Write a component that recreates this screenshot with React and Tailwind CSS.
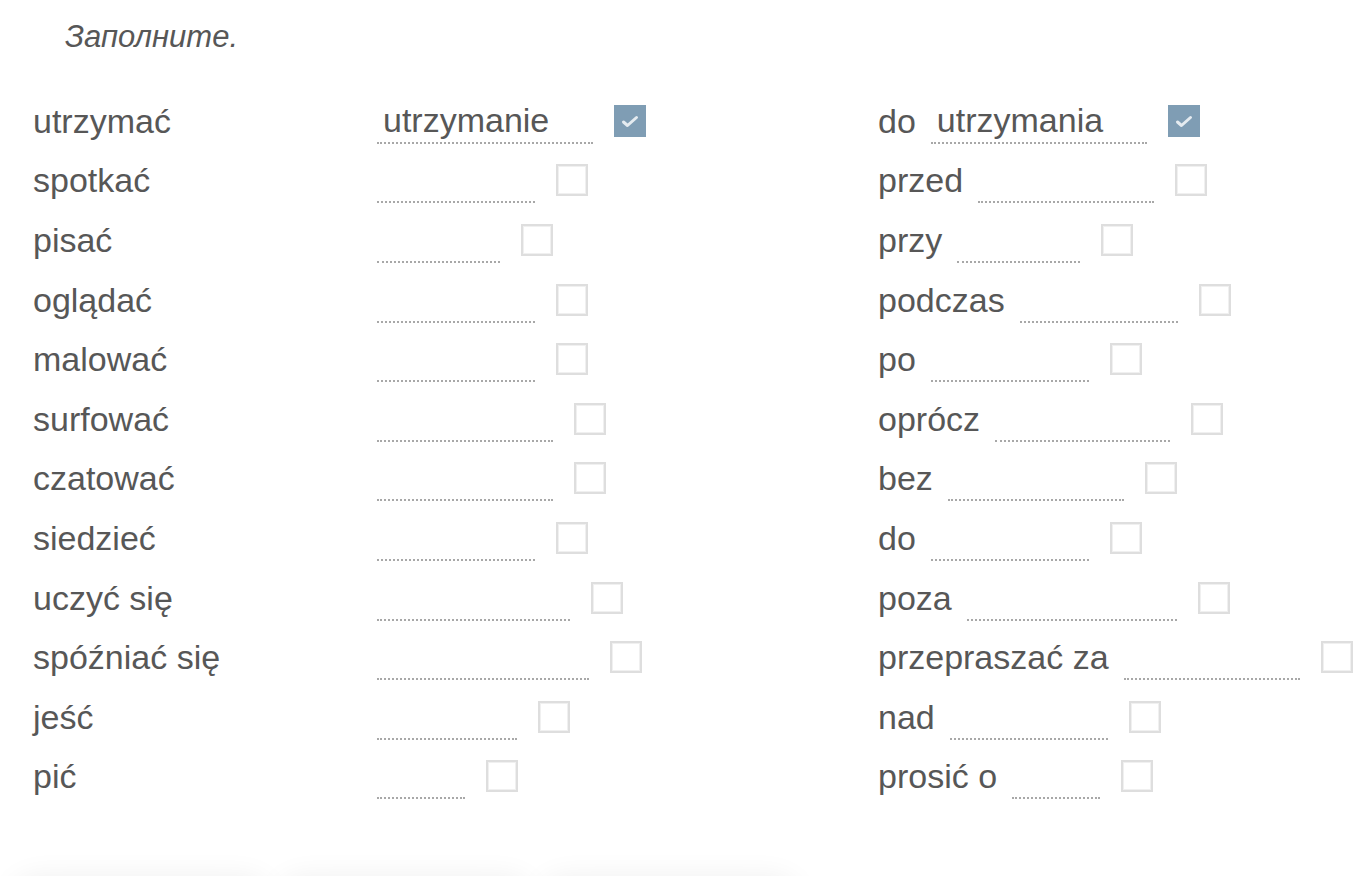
import React from 'react';

const LEFT = [
  { label: 'utrzymać', w: 216, value: 'utrzymanie', checked: true },
  { label: 'spotkać', w: 158 },
  { label: 'pisać', w: 123 },
  { label: 'oglądać', w: 158 },
  { label: 'malować', w: 158 },
  { label: 'surfować', w: 176 },
  { label: 'czatować', w: 176 },
  { label: 'siedzieć', w: 158 },
  { label: 'uczyć się', w: 193 },
  { label: 'spóźniać się', w: 212 },
  { label: 'jeść', w: 140 },
  { label: 'pić', w: 88 }
];

const RIGHT = [
  { label: 'do', w: 216, value: 'utrzymania', checked: true },
  { label: 'przed', w: 176 },
  { label: 'przy', w: 123 },
  { label: 'podczas', w: 158 },
  { label: 'po', w: 158 },
  { label: 'oprócz', w: 175 },
  { label: 'bez', w: 176 },
  { label: 'do', w: 158 },
  { label: 'poza', w: 210 },
  { label: 'przepraszać za', w: 176 },
  { label: 'nad', w: 158 },
  { label: 'prosić o', w: 88 }
];

function Box({ checked }) {
  if (checked) {
    return (
      <span className="ml-[21px] w-[32px] h-[32px] shrink-0 bg-[#7f9db4] flex items-center justify-center">
        <svg width="32" height="32" viewBox="0 0 32 32">
          <path d="M9.5 17 L13.5 20.5 L22.5 12.5" fill="none" stroke="white" strokeOpacity="0.8" strokeWidth="3" strokeLinecap="round" strokeLinejoin="round" />
        </svg>
      </span>
    );
  }
  return (
    <span className="ml-[21px] w-[32px] h-[32px] shrink-0 bg-white border-2 border-[#dedede] shadow-[inset_0_0_0_1px_#f0f0f0]"></span>
  );
}

function Blank({ w, value }) {
  return (
    <span
      className="h-[46px] shrink-0 border-b-2 border-dotted border-[#a8a8a8] pl-[6px] flex items-center leading-[38px]"
      style={{ width: w }}
    >
      {value || ''}
    </span>
  );
}

export default function App() {
  return (
    <div className="h-screen bg-white text-[#575757] overflow-hidden" style={{ fontFamily: '"Liberation Sans", Arial, sans-serif' }}>
      <div className="pt-[18px] pl-[65px] text-[31px] leading-[38px] italic">Заполните.</div>

      <div className="mt-[35px] flex text-[34px]">
        {/* left column */}
        <div className="w-[878px] shrink-0 pl-[33px]">
          {LEFT.map((r, i) => (
            <div key={i} className="h-[59.6px] flex items-center">
              <span className="w-[344px] shrink-0 leading-[38px] whitespace-nowrap">{r.label}</span>
              <Blank w={r.w} value={r.value} />
              <Box checked={r.checked} />
            </div>
          ))}
        </div>

        {/* right column */}
        <div className="flex-1">
          {RIGHT.map((r, i) => (
            <div key={i} className="h-[59.6px] flex items-center">
              <span className="shrink-0 leading-[38px] whitespace-nowrap mr-[15px]">{r.label}</span>
              <Blank w={r.w} value={r.value} />
              <Box checked={r.checked} />
            </div>
          ))}
        </div>
      </div>

      {/* buttons just below the fold, only their shadow shows */}
      <div className="mt-[78px] pl-[12px] flex gap-[8px]">
        <div className="w-[258px] h-[50px] rounded-full bg-white shadow-[0_-6px_30px_rgba(0,0,0,0.07)]"></div>
        <div className="w-[254px] h-[50px] rounded-full bg-white shadow-[0_-6px_30px_rgba(0,0,0,0.07)]"></div>
        <div className="w-[258px] h-[50px] rounded-full bg-white shadow-[0_-6px_30px_rgba(0,0,0,0.07)]"></div>
      </div>
    </div>
  );
}
